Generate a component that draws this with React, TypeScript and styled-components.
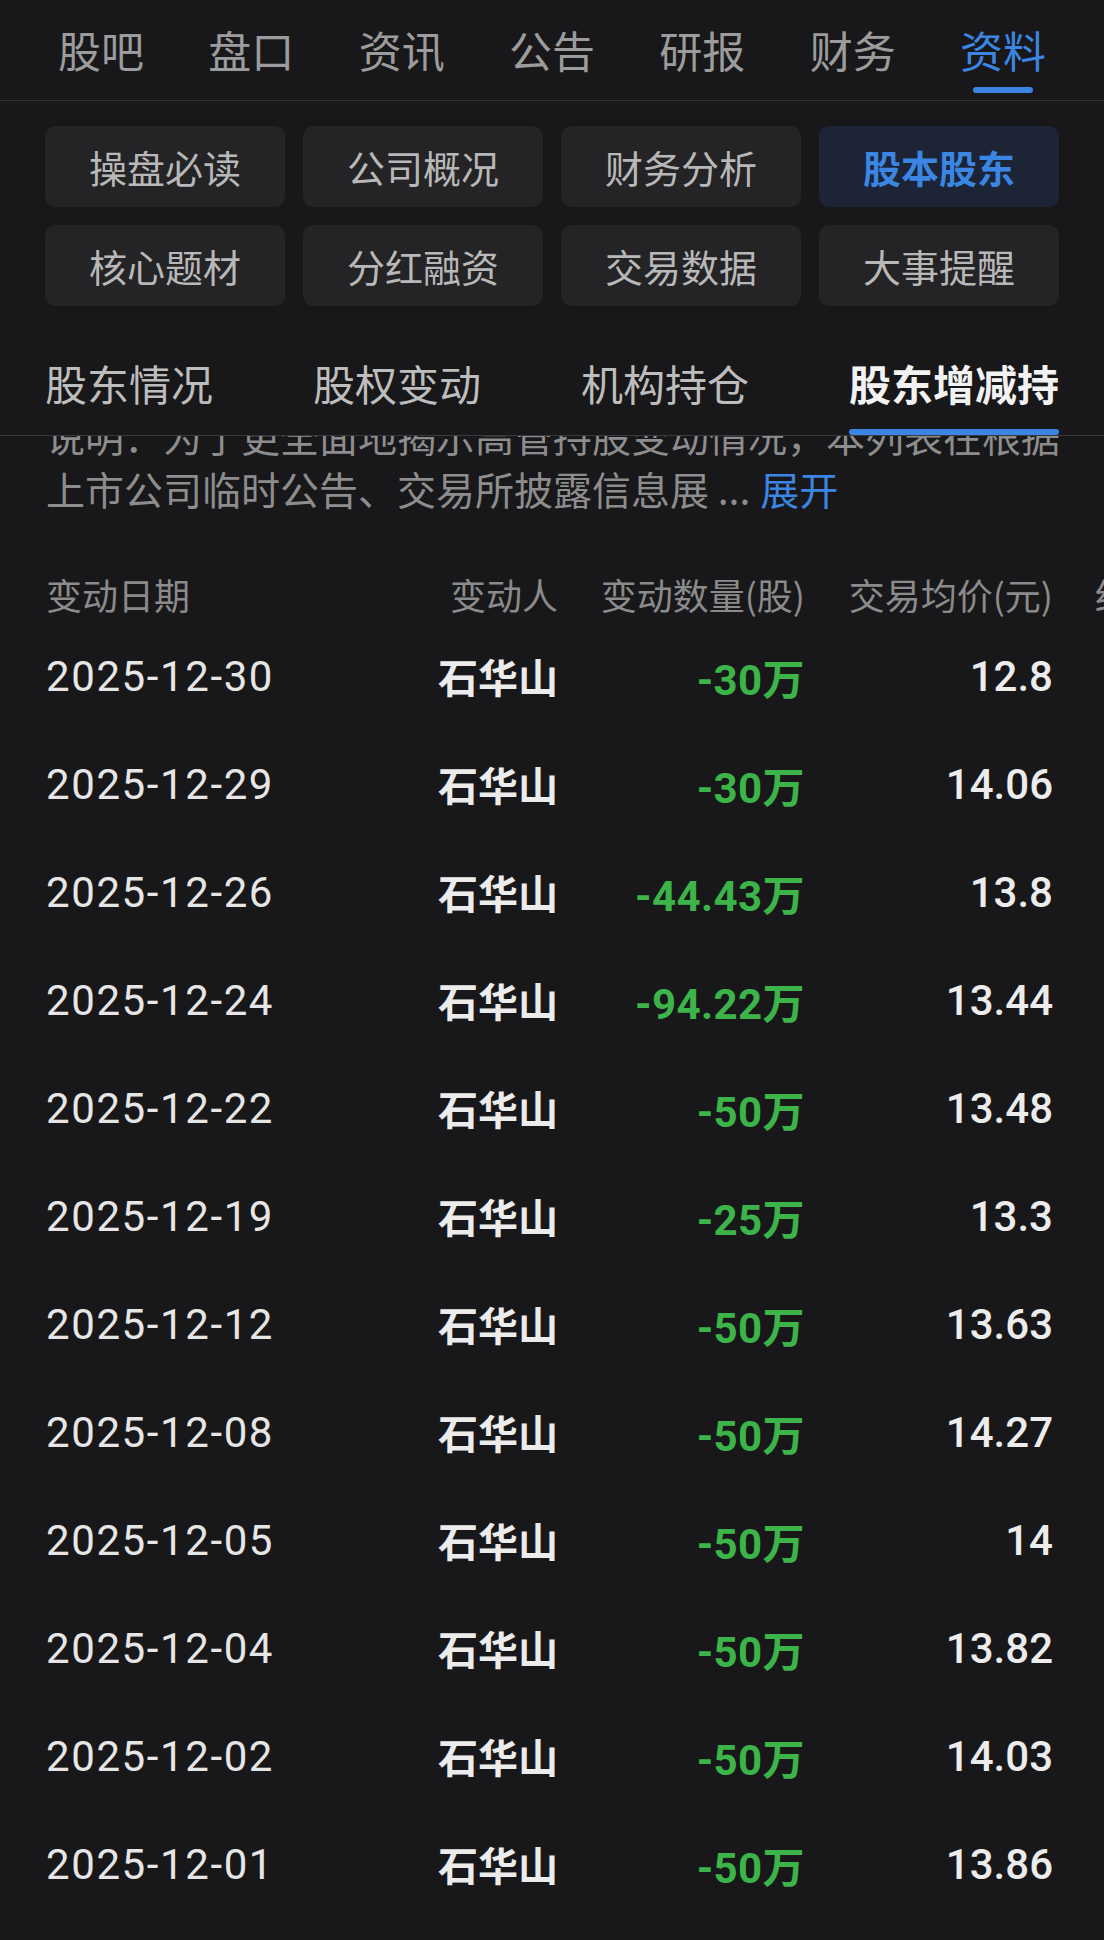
import React from 'react';
import styled, { createGlobalStyle } from 'styled-components';

const GlobalStyle = createGlobalStyle`
  html, body {
    margin: 0;
    padding: 0;
    background: #18181a;
  }
  body {
    width: 1104px;
    overflow-x: hidden;
    font-family: 'Noto Sans CJK SC', 'Noto Sans', sans-serif;
  }
`;

const Page = styled.div`
  width: 1104px;
  min-height: 1940px;
  background: #18181a;
  overflow: hidden;
`;

// top tab bar
const TopTabs = styled.nav`
  height: 100px;
  padding: 0 58px;
  display: flex;
  justify-content: space-between;
  border-bottom: 1px solid #323234;
`;

const TopTab = styled.div<{ $active?: boolean }>`
  position: relative;
  display: flex;
  align-items: center;
  height: 100%;
  padding-bottom: 2px;
  box-sizing: border-box;
  font-size: 43px;
  color: ${({ $active }) => ($active ? '#3b86e3' : '#9c9c9c')};

  &::after {
    content: '';
    display: ${({ $active }) => ($active ? 'block' : 'none')};
    position: absolute;
    left: 50%;
    bottom: 7px;
    width: 60px;
    height: 6px;
    margin-left: -30px;
    border-radius: 3px;
    background: #3b86e3;
  }
`;

// shortcut grid
const ShortcutGrid = styled.div`
  display: grid;
  grid-template-columns: repeat(4, 240px);
  gap: 18px;
  padding: 25px 45px 0;
`;

const Shortcut = styled.div<{ $active?: boolean }>`
  height: 81px;
  border-radius: 10px;
  display: flex;
  align-items: center;
  justify-content: center;
  font-size: 38px;
  font-weight: ${({ $active }) => ($active ? 700 : 400)};
  background: ${({ $active }) => ($active ? '#1c2436' : '#242426')};
  color: ${({ $active }) => ($active ? '#3b86e3' : '#b8b8b8')};
`;

// sub tabs
const SubTabs = styled.div`
  height: 130px;
  padding: 0 45px;
  display: flex;
  justify-content: space-between;
  border-bottom: 1px solid #3a3a3c;
  box-sizing: border-box;
`;

const SubTab = styled.div<{ $active?: boolean }>`
  display: flex;
  flex-direction: column;
  justify-content: flex-end;
  align-items: stretch;
  font-size: 42px;
  line-height: 50px;
  font-weight: ${({ $active }) => ($active ? 700 : 400)};
  color: ${({ $active }) => ($active ? '#f2f2f2' : '#bdbdbd')};
`;

const SubTabLine = styled.div<{ $active?: boolean }>`
  height: 6px;
  margin-top: 21px;
  border-radius: 3px;
  background: ${({ $active }) => ($active ? '#3b86e3' : 'transparent')};
`;

const Desc = styled.div`
  padding: 0 46px;
  overflow: hidden;
`;

const DescInner = styled.div`
  margin-top: -27px;
  font-size: 39px;
  line-height: 53px;
  color: #8d8d8d;
  white-space: nowrap;
`;

const More = styled.span`
  color: #3b86e3;
  margin-left: 10px;
`;

// table
const Table = styled.div`
  margin-top: 53px;
  padding-left: 46px;
  overflow: hidden;
`;

const Row = styled.div<{ $head?: boolean }>`
  display: grid;
  grid-template-columns: 250px 262px 247px 248px 260px;
  align-items: center;
  height: ${({ $head }) => ($head ? '50px' : '108px')};
  width: max-content;
  margin-bottom: ${({ $head }) => ($head ? '4px' : '0')};
`;

const HeadCell = styled.div<{ $right?: boolean }>`
  font-size: 36px;
  color: #8b8b8b;
  text-align: ${({ $right }) => ($right ? 'right' : 'left')};
  white-space: nowrap;
`;

const LastHead = styled(HeadCell)`
  padding-left: 42px;
`;

const DateCell = styled.div`
  font-family: Roboto, 'Noto Sans CJK SC', sans-serif;
  font-size: 42px;
  letter-spacing: 1.6px;
  color: #e6e6e6;
`;

const NameCell = styled.div`
  text-align: right;
  font-size: 40px;
  font-weight: 700;
  color: #ececec;
`;

const QtyCell = styled.div`
  text-align: right;
  font-family: Roboto, 'Noto Sans CJK SC', sans-serif;
  font-size: 42px;
  font-weight: 700;
  letter-spacing: 0.4px;
  color: #3cb449;
`;

const PriceCell = styled.div`
  text-align: right;
  font-family: Roboto, 'Noto Sans CJK SC', sans-serif;
  font-size: 42px;
  font-weight: 500;
  color: #ececec;
`;

const topTabs = ['股吧', '盘口', '资讯', '公告', '研报', '财务', '资料'];
const shortcuts = ['操盘必读', '公司概况', '财务分析', '股本股东', '核心题材', '分红融资', '交易数据', '大事提醒'];
const subTabs = ['股东情况', '股权变动', '机构持仓', '股东增减持'];

const records = [
  { date: '2025-12-30', qty: '-30万', price: '12.8' },
  { date: '2025-12-29', qty: '-30万', price: '14.06' },
  { date: '2025-12-26', qty: '-44.43万', price: '13.8' },
  { date: '2025-12-24', qty: '-94.22万', price: '13.44' },
  { date: '2025-12-22', qty: '-50万', price: '13.48' },
  { date: '2025-12-19', qty: '-25万', price: '13.3' },
  { date: '2025-12-12', qty: '-50万', price: '13.63' },
  { date: '2025-12-08', qty: '-50万', price: '14.27' },
  { date: '2025-12-05', qty: '-50万', price: '14' },
  { date: '2025-12-04', qty: '-50万', price: '13.82' },
  { date: '2025-12-02', qty: '-50万', price: '14.03' },
  { date: '2025-12-01', qty: '-50万', price: '13.86' },
];

const App: React.FC = () => {
  return (
    <Page>
      <GlobalStyle />
      <TopTabs>
        {topTabs.map((t) => (
          <TopTab key={t} $active={t === '资料'}>{t}</TopTab>
        ))}
      </TopTabs>

      <ShortcutGrid>
        {shortcuts.map((s) => (
          <Shortcut key={s} $active={s === '股本股东'}>{s}</Shortcut>
        ))}
      </ShortcutGrid>

      <SubTabs>
        {subTabs.map((s) => (
          <SubTab key={s} $active={s === '股东增减持'}>
            <span>{s}</span>
            <SubTabLine $active={s === '股东增减持'} />
          </SubTab>
        ))}
      </SubTabs>

      <Desc>
        <DescInner>
          <div>说明：为了更全面地揭示高管持股变动情况，本列表在根据</div>
          <div>
            上市公司临时公告、交易所披露信息展 ...<More>展开</More>
          </div>
        </DescInner>
      </Desc>

      <Table>
        <Row $head>
          <HeadCell>变动日期</HeadCell>
          <HeadCell $right>变动人</HeadCell>
          <HeadCell $right>变动数量(股)</HeadCell>
          <HeadCell $right>交易均价(元)</HeadCell>
          <LastHead>结存股票(股)</LastHead>
        </Row>
        {records.map((r) => (
          <Row key={r.date}>
            <DateCell>{r.date}</DateCell>
            <NameCell>石华山</NameCell>
            <QtyCell>{r.qty}</QtyCell>
            <PriceCell>{r.price}</PriceCell>
            <div />
          </Row>
        ))}
      </Table>
    </Page>
  );
};

export default App;
